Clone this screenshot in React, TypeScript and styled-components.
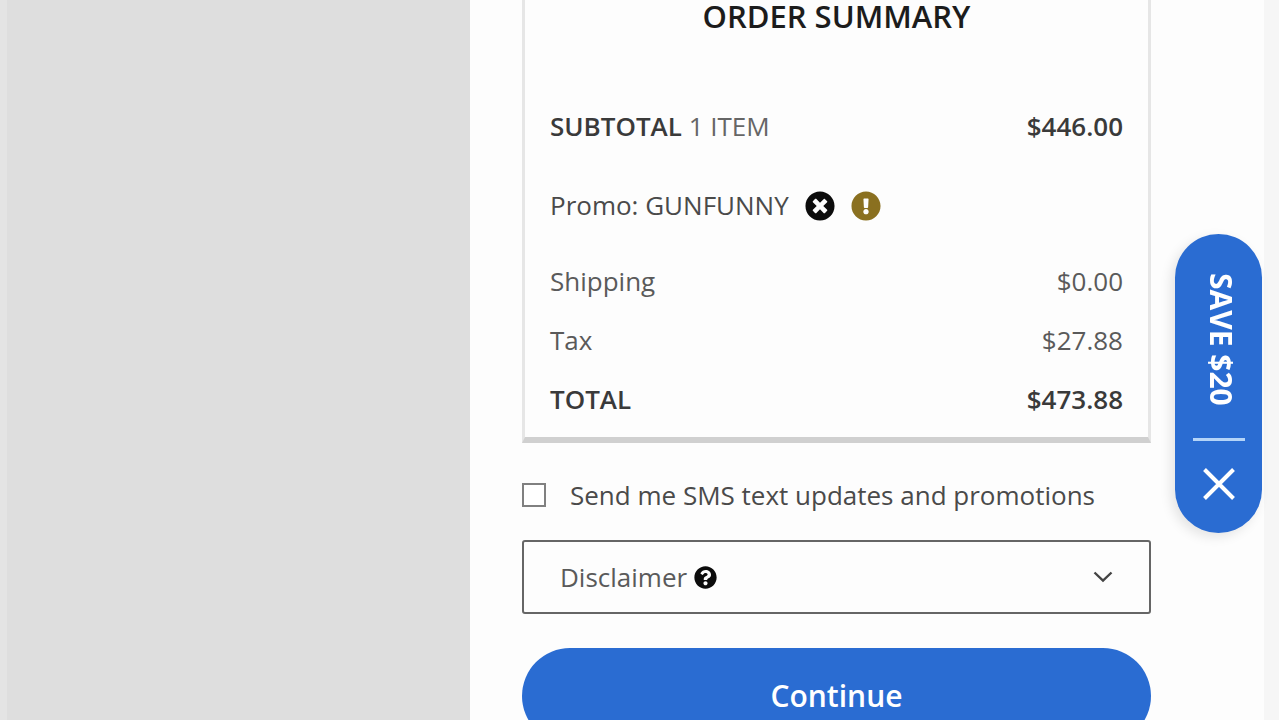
import React from "react";
import styled, { createGlobalStyle } from "styled-components";
import { FaExclamationCircle, FaQuestionCircle, FaTimesCircle } from "react-icons/fa";

const GlobalStyle = createGlobalStyle`
  *, *::before, *::after { box-sizing: border-box; }
  body {
    margin: 0;
    background: #fdfdfd;
    color: #4a4a4a;
    font: 400 26px/36px "Open Sans", "Noto Sans", sans-serif;
  }
  button { font: inherit; cursor: pointer; }
`;

const Page = styled.div`
  display: grid;
  grid-template-columns: 470px minmax(0, 1fr) 15px;
  height: 100vh;
  overflow: hidden;
`;

const Backdrop = styled.aside`
  background: #dedede;
  border-left: 7px solid #e4e4e4;
`;

const Gutter = styled.div`
  background: #f6f6f6;
`;

const Checkout = styled.main`
  padding: 0 113px 0 52px;
`;

const Card = styled.section`
  padding: 0 25px 20px;
  border: solid #e6e6e6;
  border-width: 0 3px;
  border-bottom: 6px solid #d0d0d0;
`;

const Title = styled.h2`
  margin: 0 0 76px;
  color: #1c1c1c;
  font-size: 31px;
  font-weight: 600;
  line-height: 32px;
  text-align: center;
`;

const Lines = styled.dl`
  margin: 0;
`;

const Line = styled.div<{ $gap?: number; $strong?: boolean }>`
  display: flex;
  justify-content: space-between;
  margin-bottom: ${({ $gap = 0 }) => $gap}px;
  color: ${({ $strong }) => ($strong ? "#3a3a3a" : "#5a5a5a")};
  font-weight: ${({ $strong }) => ($strong ? 600 : 400)};

  dd { margin: 0; }
`;

const Count = styled.span`
  color: #666;
  font-weight: 400;
`;

const Promo = styled.div`
  display: flex;
  align-items: center;
  gap: 16px;
  margin-bottom: 40px;
`;

const IconButton = styled.button<{ $color: string }>`
  display: flex;
  padding: 2px 0 0;
  border: 0;
  background: none;
  color: ${({ $color }) => $color};
`;

const OptIn = styled.label`
  display: flex;
  align-items: center;
  gap: 24px;
  margin: 34px 0 27px;
`;

const Checkbox = styled.input`
  appearance: none;
  flex: none;
  width: 24px;
  height: 24px;
  margin: 0;
  border: 2px solid #808080;
  background: #fff;

  &:checked { background: #2a6cd2; }
`;

const Disclaimer = styled.button`
  display: flex;
  align-items: center;
  gap: 7px;
  width: 100%;
  height: 74px;
  margin-bottom: 34px;
  padding: 0 36px;
  border: 2px solid #666;
  border-radius: 3px;
  background: transparent;
  color: #5a5a5a;
`;

const Chevron = styled.svg`
  margin-left: auto;
`;

const Continue = styled.button`
  width: 100%;
  height: 96px;
  border: 0;
  border-radius: 48px;
  background: #2a6cd2;
  color: #fff;
  font-size: 30px;
  font-weight: 600;
`;

const SaveTab = styled.div`
  position: fixed;
  top: 234px;
  right: 17px;
  display: flex;
  flex-direction: column;
  align-items: center;
  width: 87px;
  height: 299px;
  padding: 32px 0;
  border-radius: 44px;
  background: #2a6cd2;
  box-shadow: -4px 4px 12px rgba(0, 0, 0, 0.1);
`;

const TabButton = styled.button`
  display: flex;
  padding: 0;
  border: 0;
  background: none;
  color: #fff;
`;

const Offer = styled(TabButton)`
  flex: 1;
  align-items: center;
  justify-content: center;
  padding: 0 0 26px 4px;
  font-size: 30px;
  font-weight: 700;
  writing-mode: vertical-rl;
`;

const Divider = styled.hr`
  width: 52px;
  height: 3px;
  margin: 0 0 26px;
  border: 0;
  background: #b4d4f8;
`;

export default function App() {
  return (
    <>
      <GlobalStyle />
      <Page>
        <Backdrop />
        <Checkout>
          <Card>
            <Title>ORDER SUMMARY</Title>
            <Lines>
              <Line $strong $gap={43}>
                <dt>
                  SUBTOTAL <Count>1 ITEM</Count>
                </dt>
                <dd>$446.00</dd>
              </Line>
              <Promo>
                <span>Promo: GUNFUNNY</span>
                <IconButton $color="#0c0c0c" aria-label="Remove promo">
                  <FaTimesCircle size={30} />
                </IconButton>
                <IconButton $color="#8a7020" aria-label="Promo details">
                  <FaExclamationCircle size={30} />
                </IconButton>
              </Promo>
              <Line $gap={23}>
                <dt>Shipping</dt>
                <dd>$0.00</dd>
              </Line>
              <Line $gap={23}>
                <dt>Tax</dt>
                <dd>$27.88</dd>
              </Line>
              <Line $strong>
                <dt>TOTAL</dt>
                <dd>$473.88</dd>
              </Line>
            </Lines>
          </Card>
          <OptIn>
            <Checkbox type="checkbox" />
            Send me SMS text updates and promotions
          </OptIn>
          <Disclaimer>
            Disclaimer
            <FaQuestionCircle size={23} color="#0c0c0c" />
            <Chevron width="20" height="12" viewBox="0 0 20 12" fill="none" stroke="#444" strokeWidth="2.4">
              <path d="M1.5 1.5 10 9.5 18.5 1.5" />
            </Chevron>
          </Disclaimer>
          <Continue>Continue</Continue>
        </Checkout>
        <Gutter />
      </Page>
      <SaveTab>
        <Offer>SAVE $20</Offer>
        <Divider />
        <TabButton aria-label="Close">
          <svg width="34" height="34" viewBox="0 0 34 34" fill="none" stroke="currentColor" strokeWidth="4">
            <path d="M2.5 2.5 31.5 31.5M31.5 2.5 2.5 31.5" />
          </svg>
        </TabButton>
      </SaveTab>
    </>
  );
}
